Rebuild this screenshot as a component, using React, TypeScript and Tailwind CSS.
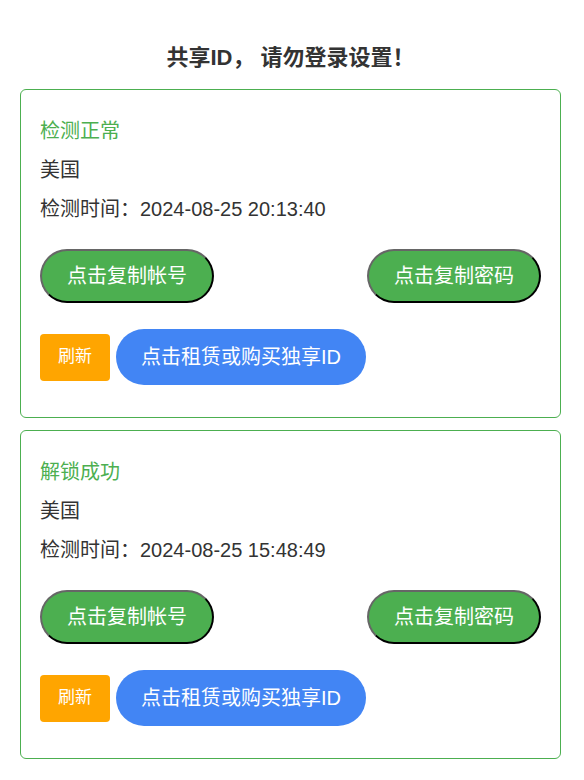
const cards = [
  { status: "检测正常", region: "美国", time: "2024-08-25 20:13:40" },
  { status: "解锁成功", region: "美国", time: "2024-08-25 15:48:49" },
];

function AccountCard({
  status,
  region,
  time,
}: {
  status: string;
  region: string;
  time: string;
}) {
  const pill =
    "h-[54px] w-[174px] rounded-full bg-[#4caf50] text-white text-[20px] border-2 border-t-[#666] border-l-[#666] border-b-black border-r-black";

  return (
    <div className="w-[541px] rounded-md border border-[#4caf50] px-[19px] pt-[22px] pb-[32px]">
      <p className="text-[20px] leading-[39px] text-[#4caf50]">{status}</p>
      <p className="text-[20px] leading-[39px] text-[#333]">{region}</p>
      <p className="text-[20px] leading-[39px] text-[#333]">检测时间：{time}</p>

      <div className="mt-[20px] flex items-center justify-between">
        <button className={pill}>点击复制帐号</button>
        <button className={pill}>点击复制密码</button>
      </div>

      <div className="mt-[26px] flex items-center gap-[6px]">
        <button className="h-[47px] w-[70px] rounded-[4px] bg-[#ffa500] text-[17px] text-white">
          刷新
        </button>
        <button className="h-[56px] w-[250px] rounded-full bg-[#4285f4] text-[20px] text-white">
          点击租赁或购买独享ID
        </button>
      </div>
    </div>
  );
}

export default function App() {
  return (
    <div
      className="min-h-screen bg-white pt-[40px] pb-5 pr-[3px]"
      style={{ fontFamily: '"Liberation Sans", "Noto Sans CJK SC", sans-serif' }}
    >
      <h1 className="text-center text-[22px] font-bold leading-[36px] text-[#333]">
        共享ID， 请勿登录设置！
      </h1>
      <div className="mt-[13px] flex flex-col items-center gap-[12px]">
        {cards.map((c, i) => (
          <AccountCard key={i} {...c} />
        ))}
      </div>
    </div>
  );
}
